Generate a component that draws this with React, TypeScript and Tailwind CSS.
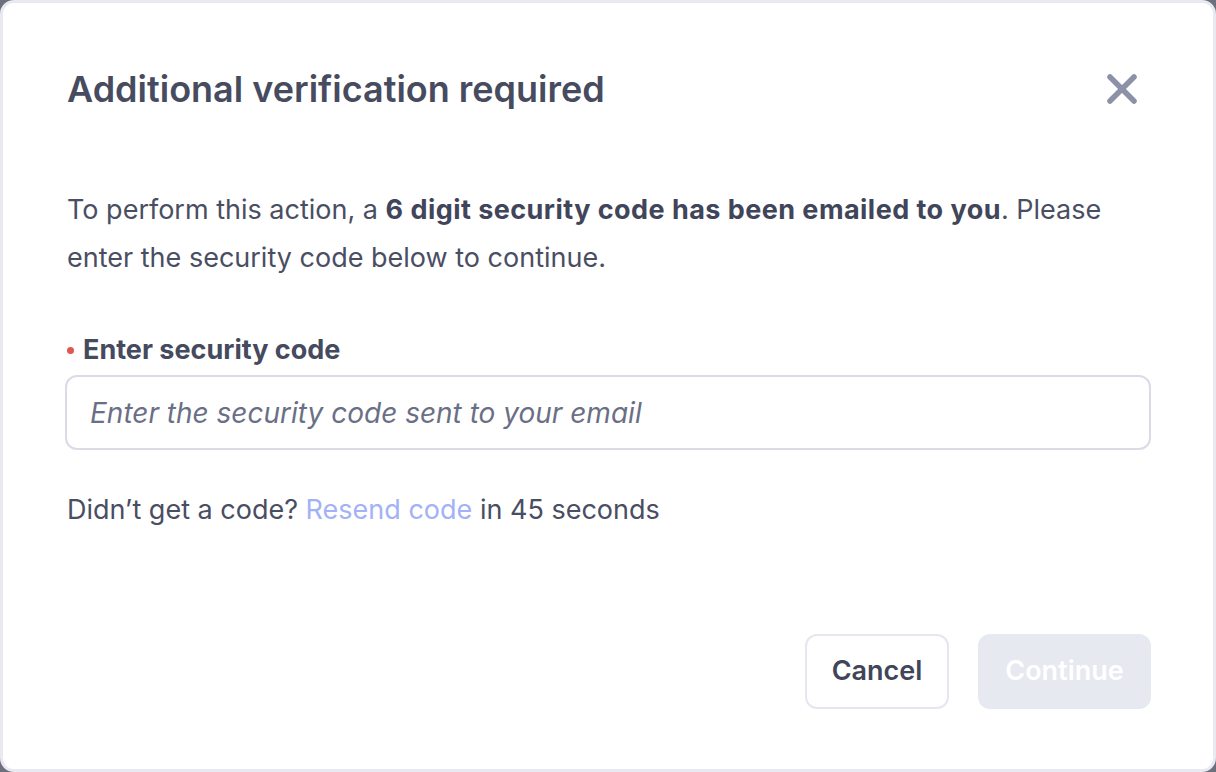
export default function App() {
  return (
    <div className="w-[1216px] h-[772px] bg-[#6e6f7c]" style={{ fontFamily: 'Inter, "Noto Sans", sans-serif' }}>
      <div className="w-full h-full bg-white rounded-[14px] border-[3px] border-[#e9e9f1] flex flex-col px-[64px] pt-[62px] pb-[60px]">
        {/* Header */}
        <div className="flex items-center justify-between">
          <h1 className="text-[36px] leading-[48px] font-semibold text-[#474b60]">
            Additional verification required
          </h1>
          <button className="text-[#8d91a8] mr-[12px]">
            <svg width="30" height="30" viewBox="0 0 30 30" fill="none" stroke="currentColor" strokeWidth="5.5" strokeLinecap="round">
              <line x1="3" y1="3" x2="27" y2="27" />
              <line x1="27" y1="3" x2="3" y2="27" />
            </svg>
          </button>
        </div>

        {/* Body */}
        <p className="mt-[73px] text-[27px] leading-[48px] text-[#4a4e63]">
          To perform this action, a{' '}
          <span className="font-bold tracking-[0.45px] text-[#41455a]">6 digit security code has been emailed to you</span>. Please
          enter the security code below to continue.
        </p>

        <label className="mt-[52px] flex items-center text-[27px] leading-[32px] font-bold text-[#454a5e]">
          <span className="w-[7px] h-[7px] rounded-full bg-[#e0574f] mr-[9px]" />
          Enter security code
        </label>
        <input
          className="mt-[9px] -mx-[2px] h-[75px] rounded-[12px] border-2 border-[#dadbe6] px-[23px] text-[28px] italic text-[#474b60] placeholder:text-[#6b6f86] outline-none"
          placeholder="Enter the security code sent to your email"
        />

        <p className="mt-[42px] text-[27px] leading-[36px] text-[#4a4e63]">
          Didn’t get a code? <span className="text-[#a3b2f7]">Resend code</span> in 45 seconds
        </p>

        {/* Footer */}
        <div className="mt-auto flex justify-end gap-[29px] -mr-[2px]">
          <button className="w-[144px] h-[75px] rounded-[12px] border-2 border-[#e5e7ee] text-[27px] font-semibold text-[#41455a]">
            Cancel
          </button>
          <button
            disabled
            className="w-[173px] h-[75px] rounded-[12px] border-2 border-[#e6e9f0] bg-[#e6e9f0] text-[27px] font-semibold text-white"
          >
            Continue
          </button>
        </div>
      </div>
    </div>
  );
}
